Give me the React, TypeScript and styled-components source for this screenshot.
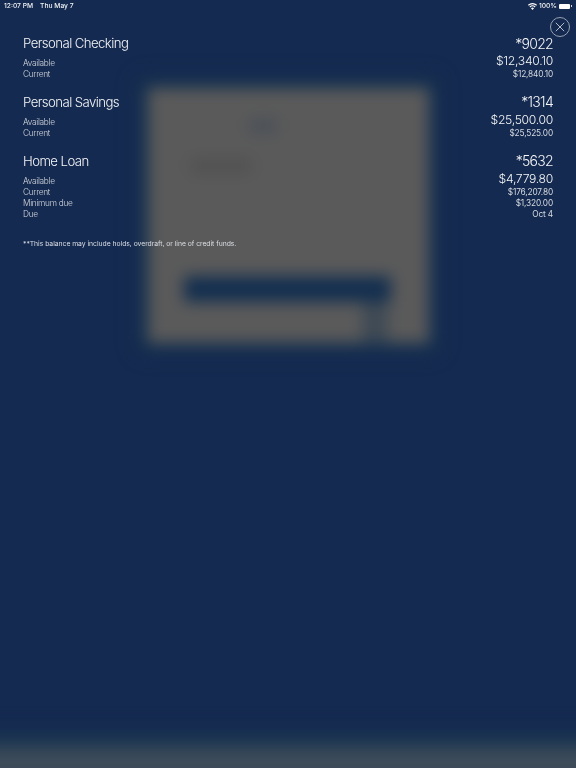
import React from "react";
import styled, { createGlobalStyle } from "styled-components";

const Global = createGlobalStyle`
  html, body { margin: 0; padding: 0; background: #152a50; }
  body { font-family: Inter, "Liberation Sans", sans-serif; -webkit-font-smoothing: antialiased; }
`;

const Screen = styled.div`
  position: relative;
  width: 576px;
  height: 768px;
  overflow: hidden;
  background: #152a50;
  color: #fff;
`;

const Backdrop = styled.div`
  position: absolute;
  inset: 0;
  filter: blur(7.5px);
`;

const Halo = styled.div`
  position: absolute;
  left: 138px;
  top: 78px;
  width: 300px;
  height: 274px;
  background: #15314f;
  filter: blur(6px);
`;

const Sheet = styled.div`
  position: absolute;
  left: 148px;
  top: 88px;
  width: 281px;
  height: 255px;
  background: #5a5a5a;
`;

const Smudge = styled.div<{ $x: number; $y: number; $w: number; $h: number; $c: string }>`
  position: absolute;
  left: ${(p) => p.$x}px;
  top: ${(p) => p.$y}px;
  width: ${(p) => p.$w}px;
  height: ${(p) => p.$h}px;
  background: ${(p) => p.$c};
  border-radius: 3px;
`;

const FooterGlow = styled.div`
  position: absolute;
  left: -20px;
  right: -20px;
  bottom: -10px;
  height: 54px;
  background: linear-gradient(to bottom, #152a50 0, #15304f 12px, #2a4055 22px, #414d5a 36px, #454f5a 100%);
`;

const Content = styled.div`
  position: relative;
  display: flex;
  flex-direction: column;
  filter: blur(0.25px);
`;

const StatusBar = styled.div`
  display: flex;
  align-items: center;
  justify-content: space-between;
  height: 12px;
  padding: 0 3px 0 4px;
  font-size: 6.7px;
  font-weight: 500;
  color: #f2f4f7;
`;

const StatusGroup = styled.div`
  display: flex;
  align-items: center;
  gap: 7px;
`;

const StatusRight = styled(StatusGroup)`
  gap: 2px;
`;

const Battery = styled.div`
  position: relative;
  width: 11px;
  height: 5px;
  margin-right: 3px;
  background: #fff;
  border-radius: 1px;
  &::after {
    content: "";
    position: absolute;
    right: -1.5px;
    top: 1.5px;
    width: 1px;
    height: 2px;
    background: #cfd4dc;
  }
`;

const CloseButton = styled.button`
  position: absolute;
  top: 17px;
  right: 6px;
  width: 20px;
  height: 20px;
  padding: 0;
  display: flex;
  align-items: center;
  justify-content: center;
  border: 0.7px solid #97a2b3;
  border-radius: 50%;
  background: transparent;
  color: #dfe3e9;
`;

const Accounts = styled.div`
  display: flex;
  flex-direction: column;
  gap: 12.2px;
  padding: 21px 23px 0 23px;
`;

const Account = styled.section`
  display: flex;
  flex-direction: column;
`;

const TitleRow = styled.div`
  display: flex;
  justify-content: space-between;
  align-items: center;
  height: 20px;
  margin-bottom: 4.4px;
  font-size: 13.2px;
  font-weight: 300;
  letter-spacing: -0.58px;
  color: #f4f5f7;
`;

const Number = styled.span`
  font-size: 14px;
  letter-spacing: -0.7px;
`;

const Row = styled.div`
  display: flex;
  justify-content: space-between;
  align-items: center;
  height: 11.2px;
  font-size: 8.3px;
  font-weight: 300;
  letter-spacing: -0.28px;
  color: #d5d9e0;
`;

const Value = styled.span<{ $big?: boolean }>`
  font-size: ${(p) => (p.$big ? "12.2px" : "8.3px")};
  font-weight: ${(p) => (p.$big ? 300 : 400)};
  letter-spacing: ${(p) => (p.$big ? "-0.3px" : "-0.15px")};
  margin-bottom: ${(p) => (p.$big ? "4px" : "0")};
  color: ${(p) => (p.$big ? "#f4f5f7" : "#d5d9e0")};
`;

const Note = styled.p`
  margin: 19px 0 0;
  padding: 0 23px;
  font-size: 6.8px;
  font-weight: 400;
  letter-spacing: -0.03px;
  line-height: 10px;
  color: #dcdfe5;
`;

const data = [
  { name: "Personal Checking", num: "*9022", rows: [["Available", "$12,340.10"], ["Current", "$12,840.10"]] },
  { name: "Personal Savings", num: "*1314", rows: [["Available", "$25,500.00"], ["Current", "$25,525.00"]] },
  {
    name: "Home Loan",
    num: "*5632",
    rows: [["Available", "$4,779.80"], ["Current", "$176,207.80"], ["Minimum due", "$1,320.00"], ["Due", "Oct 4"]],
  },
];

export default function App() {
  return (
    <Screen>
      <Global />
      <Backdrop>
        <Halo />
        <Sheet>
          <Smudge $x={100} $y={30} $w={30} $h={16} $c="#4c5158" />
          <Smudge $x={42} $y={70} $w={62} $h={16} $c="#525252" />
          <Smudge $x={36} $y={188} $w={207} $h={26} $c="#142f4f" />
          <Smudge $x={214} $y={214} $w={26} $h={41} $c="#3f4a55" />
        </Sheet>
        <FooterGlow />
      </Backdrop>
      <Content>
        <StatusBar>
          <StatusGroup>
            <span>12:07 PM</span>
            <span>Thu May 7</span>
          </StatusGroup>
          <StatusRight>
            <svg width="9" height="7" viewBox="0 0 18 14" fill="#fff" aria-hidden="true">
              <path d="M9 14 6 10.6a4.4 4.4 0 0 1 6 0Z" />
              <path d="M4.4 8.8 2.9 7.1a9 9 0 0 1 12.2 0l-1.5 1.7a6.8 6.8 0 0 0-9.2 0Z" />
              <path d="M1.3 5.4 0 3.7a13.2 13.2 0 0 1 18 0l-1.3 1.7a11 11 0 0 0-15.4 0Z" />
            </svg>
            <span>100%</span>
            <Battery />
          </StatusRight>
        </StatusBar>
        <CloseButton aria-label="Close">
          <svg width="10" height="10" viewBox="0 0 10 10" stroke="currentColor" strokeWidth="0.8" fill="none" aria-hidden="true">
            <path d="M0.8 0.8 9.2 9.2M9.2 0.8 0.8 9.2" />
          </svg>
        </CloseButton>
        <Accounts>
          {data.map((a) => (
            <Account key={a.name}>
              <TitleRow>
                <span>{a.name}</span>
                <Number>{a.num}</Number>
              </TitleRow>
              {a.rows.map(([label, value], i) => (
                <Row key={label}>
                  <span>{label}</span>
                  <Value $big={i === 0}>{value}</Value>
                </Row>
              ))}
            </Account>
          ))}
        </Accounts>
        <Note>**This balance may include holds, overdraft, or line of credit funds.</Note>
      </Content>
    </Screen>
  );
}
